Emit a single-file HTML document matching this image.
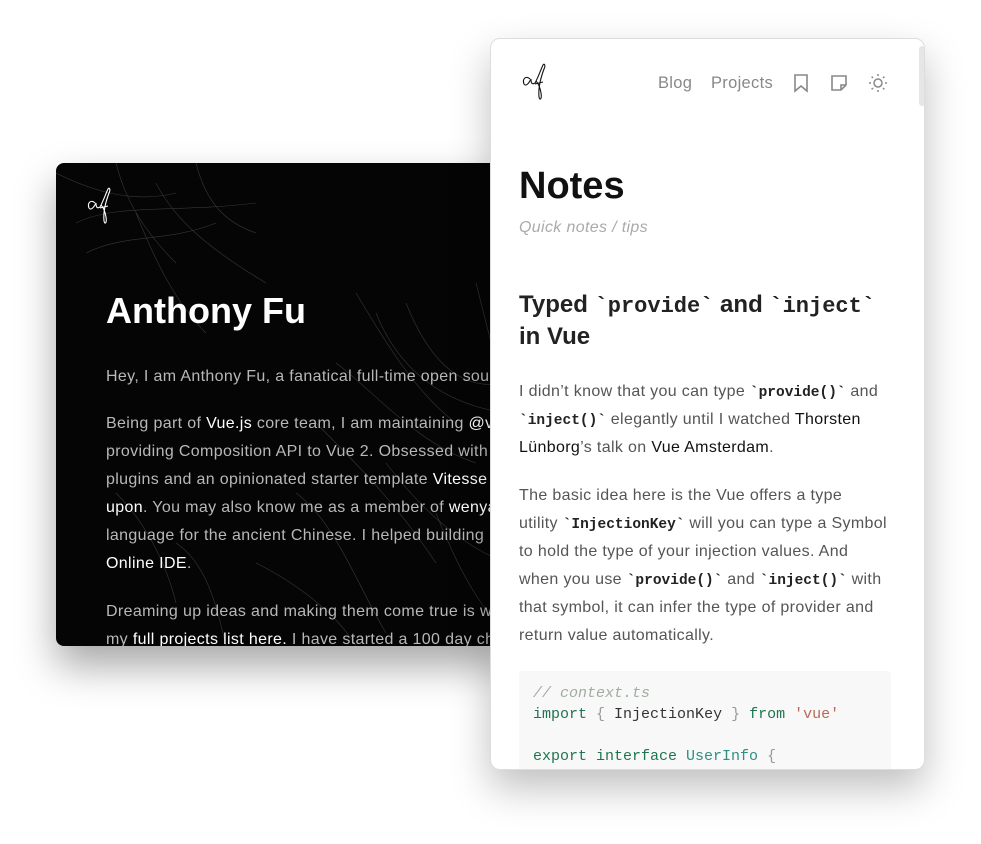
<!DOCTYPE html>
<html><head><meta charset="utf-8"><style>
*{margin:0;padding:0;box-sizing:border-box}
body{width:981px;height:844px;background:#fff;position:relative;overflow:hidden;font-family:"Liberation Sans",sans-serif}
.dark{position:absolute;left:56px;top:163px;width:450px;height:483px;background:#050505;border-radius:8px;overflow:hidden;box-shadow:0 20px 40px rgba(0,0,0,.35)}
.light{position:absolute;left:490px;top:38px;width:435px;height:732px;background:#fff;border-radius:10px;overflow:hidden;border:1px solid #ddd;box-shadow:0 18px 40px rgba(0,0,0,.25)}
.l{position:absolute;white-space:nowrap;font-size:16px;line-height:28px;letter-spacing:0.35px}
.dark .l{left:50px;color:#b8b8b8}
.dark b{color:#fff;font-weight:normal}
.light .l{left:28px;color:#555}
.light a{color:#111;text-decoration:none}
code{font-family:"Liberation Mono",monospace;font-weight:bold;color:#222;font-size:14.5px;letter-spacing:0}
.c{position:absolute;left:42px;white-space:nowrap;font-family:"Liberation Mono",monospace;font-size:15px;line-height:21px;color:#333}
</style></head><body>
<div class="dark">
<svg width="450" height="483" style="position:absolute;left:0;top:0" stroke="#444" stroke-width="0.6" fill="none" opacity="0.8">
<path d="M0 10 C40 30 80 40 120 30 M20 60 C60 40 120 50 200 40 M60 0 C70 40 90 70 120 100 M100 20 C120 60 160 90 210 120 M30 90 C70 70 110 80 160 60 M140 0 C150 40 170 60 200 70 M80 50 C100 100 120 140 150 170"/>
<path d="M300 130 C330 180 360 230 400 260 M320 150 C340 200 380 240 450 250 M280 200 C320 230 360 280 420 300 M350 140 C370 190 400 230 450 220 M260 260 C300 300 340 340 380 400 M330 300 C360 340 400 380 450 400 M240 330 C280 360 300 420 330 470 M380 350 C400 400 420 440 450 470 M200 400 C240 420 280 450 300 483 M420 120 C430 160 440 200 450 230"/>
<path d="M120 380 C150 400 160 440 170 483 M60 330 C90 360 110 400 120 440"/>
</svg>
<svg style="position:absolute;left:30px;top:24px" width="28" height="40" viewBox="0 0 28 40" fill="none" stroke="#fff" stroke-width="1.1"><path d="M9 16 C5 12 1 16 3 21 C5 24 8 20 10 16 C10 20 11 22 14 20 C17 15 20 6 22 2 C23 0 25 2 23 6 C20 14 17 24 18 34 C19 38 21 36 20 30 C19 24 17 20 15 18 M14 21 L22 19"/></svg>
<div class="l" style="top:126px;font-size:36px;line-height:44px;font-weight:bold;color:#fff;letter-spacing:0">Anthony Fu</div>
<div class="l" style="top:200px">Hey, I am Anthony Fu, a fanatical full-time open source</div>
<div class="l" style="top:247px">Being part of <b>Vue.js</b> core team, I am maintaining <b>@vueuse</b></div>
<div class="l" style="top:275px">providing Composition API to Vue 2. Obsessed with</div>
<div class="l" style="top:303px">plugins and an opinionated starter template <b>Vitesse</b></div>
<div class="l" style="top:331px"><b>upon</b>. You may also know me as a member of <b>wenyan</b></div>
<div class="l" style="top:359px">language for the ancient Chinese. I helped building</div>
<div class="l" style="top:387px"><b>Online IDE</b>.</div>
<div class="l" style="top:435px">Dreaming up ideas and making them come true is what</div>
<div class="l" style="top:463px">my <b>full projects list here.</b> I have started a 100 day challenge</div>
</div>
<div class="light">
<div style="position:absolute;left:428px;top:7px;width:6px;height:60px;background:#e6e6e6;border-radius:3px"></div>
<svg style="position:absolute;left:30px;top:24px" width="28" height="40" viewBox="0 0 28 40" fill="none" stroke="#111" stroke-width="1.1"><path d="M9 16 C5 12 1 16 3 21 C5 24 8 20 10 16 C10 20 11 22 14 20 C17 15 20 6 22 2 C23 0 25 2 23 6 C20 14 17 24 18 34 C19 38 21 36 20 30 C19 24 17 20 15 18 M14 21 L22 19"/></svg>
<div style="position:absolute;left:167px;top:35px;font-size:16.5px;color:#888;letter-spacing:0.3px">Blog</div>
<div style="position:absolute;left:220px;top:35px;font-size:16.5px;color:#888;letter-spacing:0.3px">Projects</div>
<svg style="position:absolute;left:301px;top:34px" width="18" height="20" viewBox="0 0 18 20" fill="none" stroke="#888" stroke-width="1.6"><path d="M3 2h12v16l-6-5-6 5z"/></svg>
<svg style="position:absolute;left:339px;top:35px" width="18" height="18" viewBox="0 0 18 18" fill="none" stroke="#888" stroke-width="1.6"><path d="M2 2h14v9l-5 5H2z M16 11h-5v5"/></svg>
<svg style="position:absolute;left:377px;top:34px" width="20" height="20" viewBox="0 0 20 20" fill="none" stroke="#888" stroke-width="1.5"><circle cx="10" cy="10" r="4"/><path d="M10 1v2M10 17v2M1 10h2M17 10h2M3.6 3.6l1.4 1.4M15 15l1.4 1.4M3.6 16.4L5 15M15 5l1.4-1.4"/></svg>
<div class="l" style="top:124px;font-size:38px;line-height:46px;font-weight:bold;color:#111;letter-spacing:0">Notes</div>
<div class="l" style="top:175px;font-style:italic;color:#aaa">Quick notes / tips</div>
<div class="l" style="top:250px;font-size:24px;line-height:32px;font-weight:bold;color:#222;letter-spacing:0">Typed <code style="font-size:22px">`provide`</code> and <code style="font-size:22px">`inject`</code></div>
<div class="l" style="top:282px;font-size:24px;line-height:32px;font-weight:bold;color:#222;letter-spacing:0">in Vue</div>
<div class="l" style="top:339px">I didn’t know that you can type <code>`provide()`</code> and</div>
<div class="l" style="top:367px"><code>`inject()`</code> elegantly until I watched <a>Thorsten</a></div>
<div class="l" style="top:395px"><a>Lünborg</a>’s talk on <a>Vue Amsterdam</a>.</div>
<div class="l" style="top:443px">The basic idea here is the Vue offers a type</div>
<div class="l" style="top:471px">utility <code>`InjectionKey`</code> will you can type a Symbol</div>
<div class="l" style="top:499px">to hold the type of your injection values. And</div>
<div class="l" style="top:527px">when you use <code>`provide()`</code> and <code>`inject()`</code> with</div>
<div class="l" style="top:555px">that symbol, it can infer the type of provider and</div>
<div class="l" style="top:583px">return value automatically.</div>
<div style="position:absolute;left:28px;top:632px;width:372px;height:120px;background:#f8f8f8;border-radius:4px"></div>
<div class="c" style="top:644px;color:#a0ada0;font-style:italic">// context.ts</div>
<div class="c" style="top:665px"><span style="color:#1e754f">import</span> <span style="color:#999">{</span> InjectionKey <span style="color:#999">}</span> <span style="color:#1e754f">from</span> <span style="color:#b56959">'vue'</span></div>
<div class="c" style="top:707px"><span style="color:#1e754f">export interface</span> <span style="color:#2e8f82">UserInfo</span> <span style="color:#999">{</span></div>
</div>
</body></html>
